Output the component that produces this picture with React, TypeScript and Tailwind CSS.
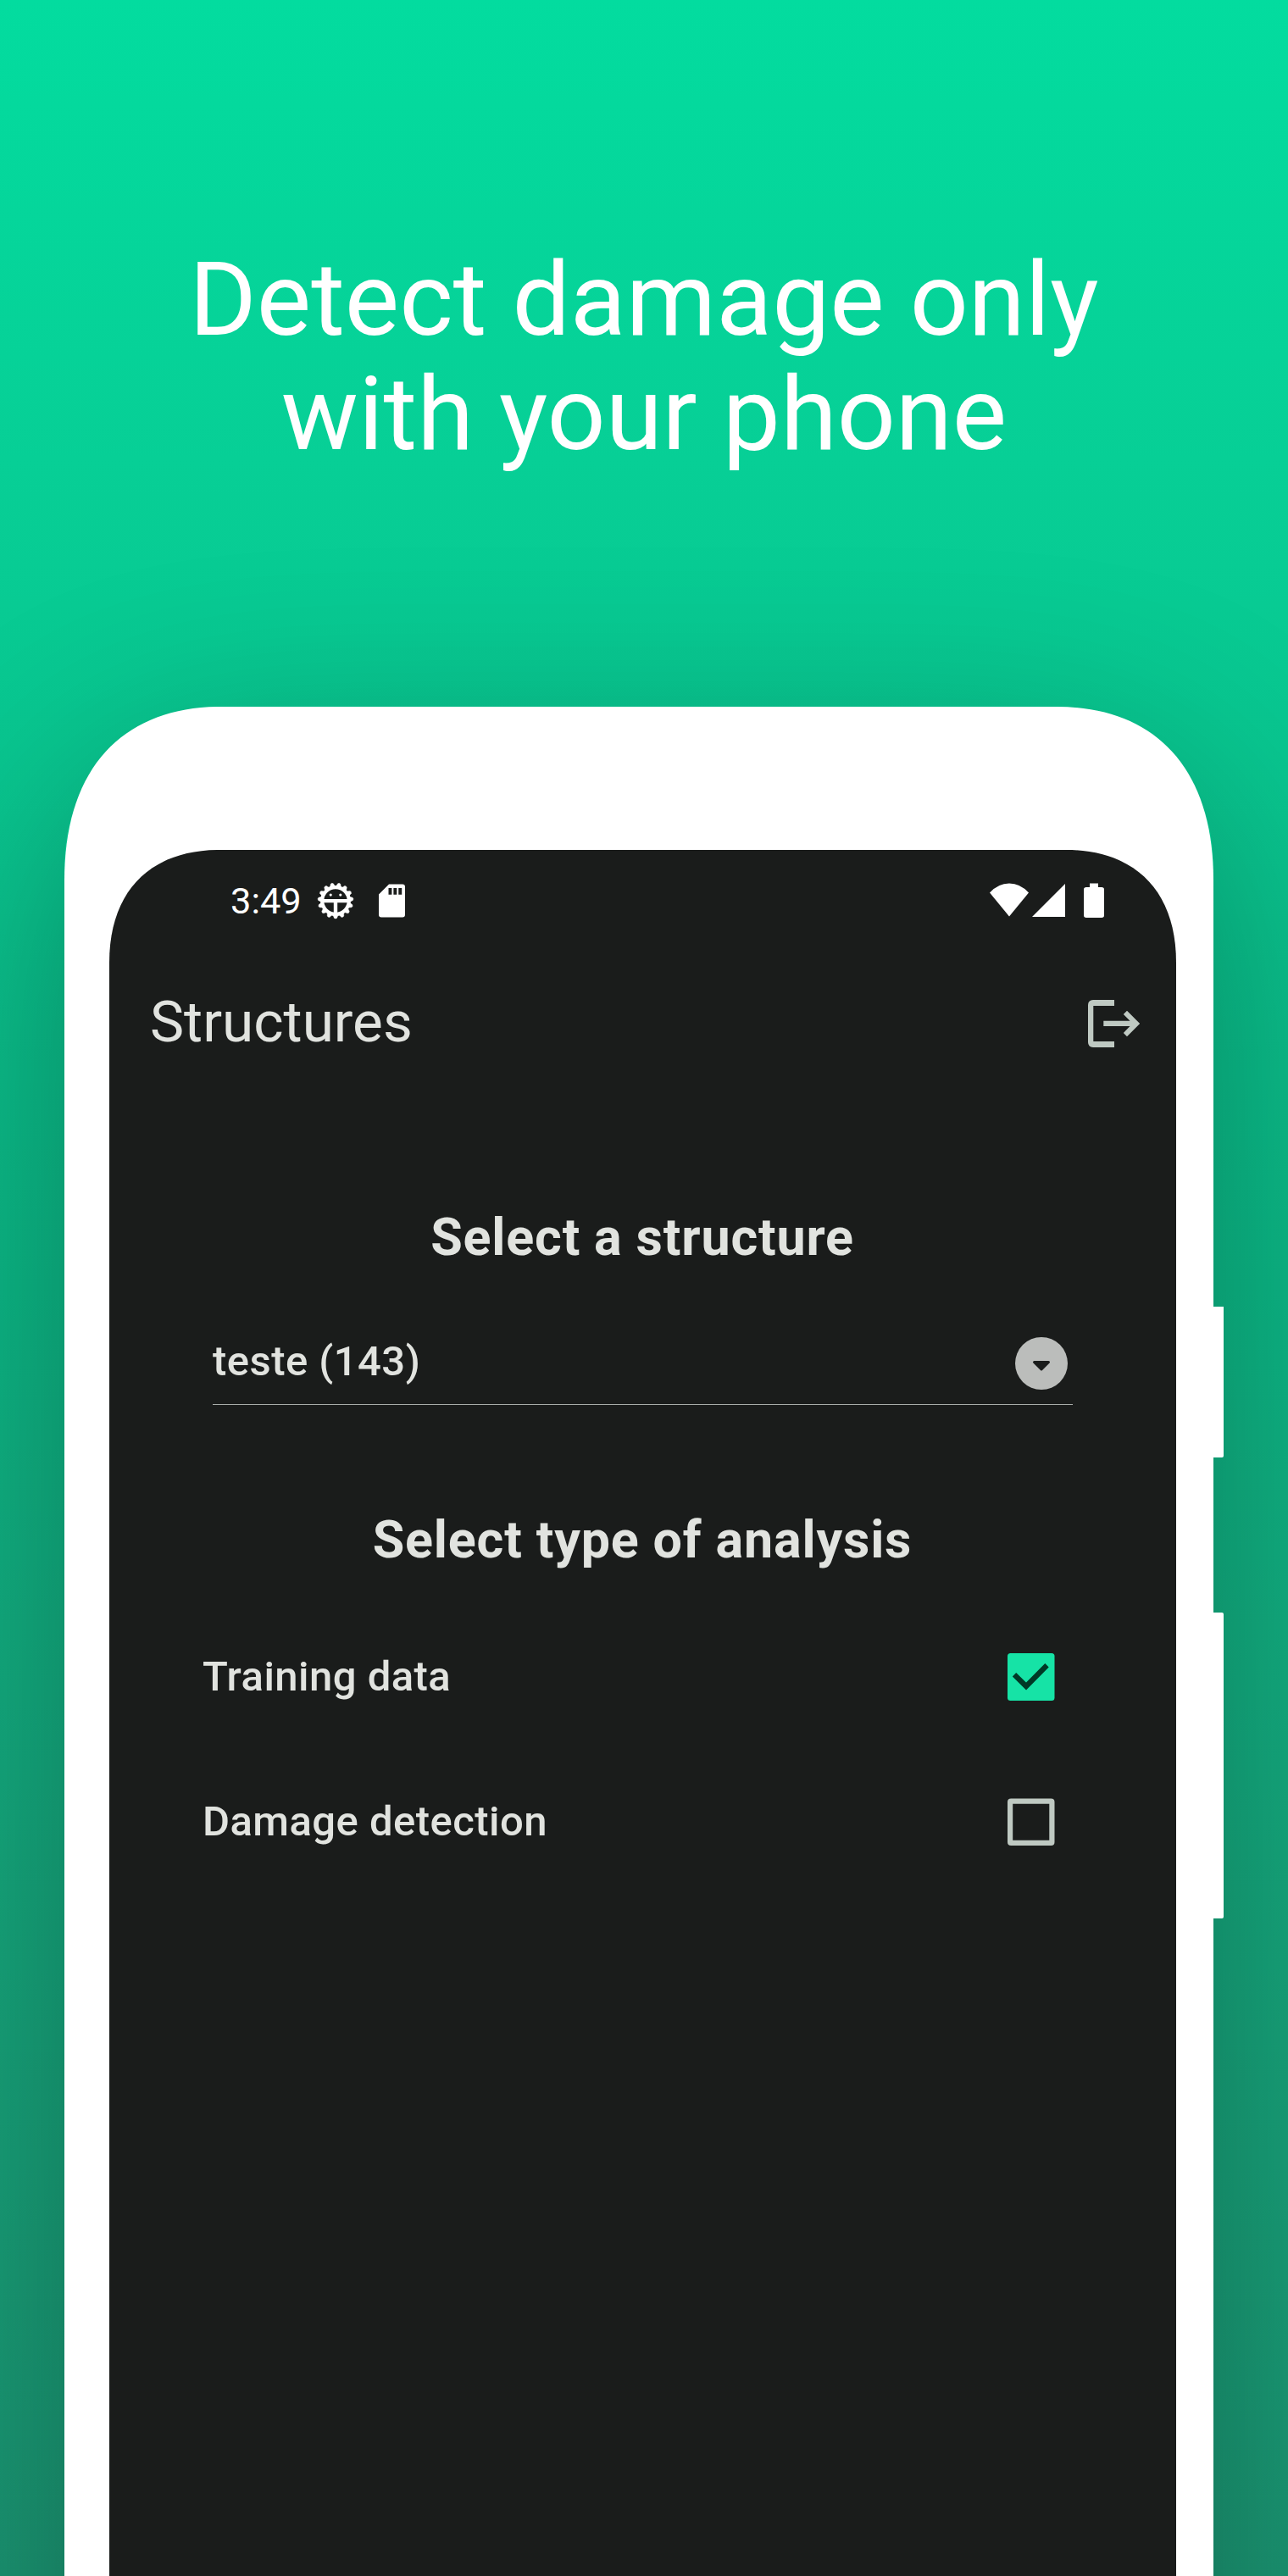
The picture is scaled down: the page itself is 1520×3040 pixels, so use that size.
const TEETH = Array.from({ length: 15 }, (_, i) => 90 + i * 24);

// Status bar glyph: cogwheel with the debug android face
function DebugIcon() {
  return (
    <svg width="44" height="44" viewBox="-22 -22 44 44" className="block">
      <circle r="15.8" fill="none" stroke="#fff" strokeWidth="4.2" />
      {TEETH.map((a) => (
        <path key={a} d="M17 -3L20.4 -1.6Q21.8 0 20.4 1.6L17 3Z" fill="#fff" stroke="#fff" strokeWidth="0.4" transform={`rotate(${a})`} />
      ))}
      <path d="M-15 -1.9H15V2.2H2.2V15H-2.2V2.2H-15Z" fill="#fff" />
      <circle cx="-5.8" cy="-6.9" r="1.6" fill="#fff" />
      <circle cx="5.8" cy="-6.9" r="1.6" fill="#fff" />
    </svg>
  );
}

function SdIcon() {
  return (
    <svg width="31" height="40" viewBox="0 0 31 40" className="block">
      <path
        fillRule="evenodd"
        fill="#fff"
        d="M12 0.5H28Q31 0.5 31 3.5V36.5Q31 39.5 28 39.5H3Q0 39.5 0 36.5V12.5ZM11.5 5V12.7H15.4V5ZM17.4 5V12.7H21.3V5ZM23.3 5V12.7H27.2V5Z"
      />
    </svg>
  );
}

function StatusRight() {
  return (
    <svg width="136" height="42" viewBox="0 0 136 42" className="block">
      <path d="M0 11.5Q10 0.5 23 0.5T46 11.5L23 39.5Z" fill="#fff" />
      <path d="M50 40L89 1V40Z" fill="#fff" />
      <path d="M118 0.5H128V5H132Q135 5 135 7.6V38.3Q135 41 132 41H114Q111 41 111 38.3V7.6Q111 5 114 5H118Z" fill="#fff" />
    </svg>
  );
}

function LogoutIcon() {
  return (
    <svg width="62" height="56" viewBox="0 0 62 56" className="block">
      <path
        fill="#bfc9c2"
        d="M6 0H31V7H6.3V49H31V56H6Q0 55.4 0 50V6Q0 0.6 6 0ZM18.3 24.7H49.5L41.8 17L46 12.7L61.2 28L46 43.3L41.8 39L49.5 31H18.3Z"
      />
    </svg>
  );
}

function CheckRow({ label, checked }: { label: string; checked?: boolean }) {
  return (
    <div className="flex h-[171px] items-start justify-between">
      <span className="pt-px text-[49px] leading-[60px] font-medium tracking-[0.46px]">{label}</span>
      {checked ? (
        <svg width="56" height="56" viewBox="0 0 56 56" className="mt-[3px] block">
          <rect width="55.5" height="56" rx="3.5" fill="#16e3a6" />
          <path d="M8 25.2L22 39L46.5 14.2" fill="none" stroke="#003826" strokeWidth="6.2" />
        </svg>
      ) : (
        <svg width="56" height="56" viewBox="0 0 56 56" className="mt-[3px] block">
          <rect x="3.1" y="3.6" width="49.3" height="49.3" rx="1" fill="none" stroke="#bfc9c2" strokeWidth="6.2" strokeLinejoin="round" />
        </svg>
      )}
    </div>
  );
}

export default function App() {
  return (
    <div className="h-[3040px] w-[1520px] overflow-hidden bg-linear-to-b from-[#03dc9f] via-[#0cb886] to-[#1b9673] font-[Roboto,sans-serif]">
      <h1 className="h-[834px] pt-[286px] text-center text-[121.3px] leading-[135px] font-normal text-white">
        Detect damage only
        <br />
        with your phone
      </h1>

      <div className="relative ml-[76px] h-[2900px] w-[1356px] rounded-t-[185px] shadow-[0_80px_300px_rgba(0,0,0,0.3)]">
        <span className="absolute top-[693px] -right-[12px] h-[193px] w-[24px] rounded-[2px] bg-white [clip-path:inset(15px_0_0_0)]" />
        <span className="absolute top-[1069px] -right-[12px] h-[361px] w-[24px] rounded-[2px] bg-white" />

        <div className="relative h-full bg-white pt-[169px] pl-[53px] [clip-path:path('M0_2900V205C0_68_73_0_185_0H1171C1283_0_1356_68_1356_205V2900Z')]">
          <main className="h-full w-[1259px] bg-[#1a1c1b] text-[#e1e3df] [clip-path:path('M0_2900V133C0_47_50_0_130_0H1129C1209_0_1259_47_1259_133V2900Z')]">
            <div className="flex h-[164px] items-start pt-[31px] pr-[84px] pl-[143px] text-white">
              <span className="w-[102px] text-[43.4px] leading-[60px]">3:49</span>
              <div className="flex items-center pt-[7px]">
                <DebugIcon />
                <div className="ml-[29px]">
                  <SdIcon />
                </div>
              </div>
              <div className="ml-auto pt-[8px]">
                <StatusRight />
              </div>
            </div>

            <header className="flex h-[80px] items-start justify-between pr-[42px] pl-[48px]">
              <span className="-mt-px text-[67.5px] leading-[80px]">Structures</span>
              <div className="pt-[13px]">
                <LogoutIcon />
              </div>
            </header>

            <h2 className="mt-[177px] pr-px text-center text-[61px] leading-[72px] font-bold tracking-[0.83px]">Select a structure</h2>

            <div className="mt-[81px] ml-[122px] flex h-[81px] w-[1015px] items-start justify-between border-b border-[#a9adaa] pr-[6px]">
              <span className="text-[49px] leading-[60px] font-medium tracking-[0.46px]">teste (143)</span>
              <svg width="62" height="62" viewBox="0 0 62 62" className="mt-px block">
                <circle cx="31" cy="31" r="31" fill="#bbbdbb" />
                <path d="M22.5 29.5H39.5L31 38Z" fill="#1a1c1b" stroke="#1a1c1b" strokeWidth="3" strokeLinejoin="round" />
              </svg>
            </div>

            <h2 className="mt-[123px] pr-px text-center text-[61px] leading-[72px] font-bold tracking-[0.83px]">Select type of analysis</h2>

            <div className="mt-[95px] pr-[143px] pl-[110px]">
              <CheckRow label="Training data" checked />
              <CheckRow label="Damage detection" />
            </div>
          </main>
        </div>
      </div>
    </div>
  );
}
